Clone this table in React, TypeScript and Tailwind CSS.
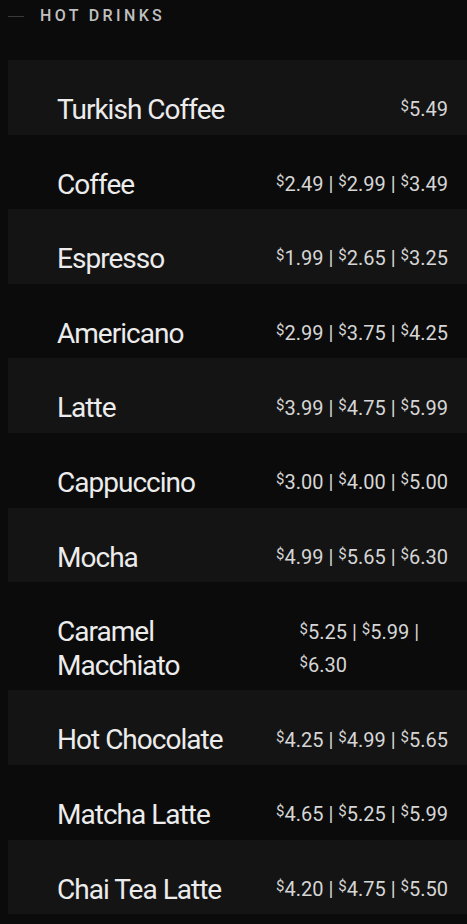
import React from "react";

type Item = { name: string; prices: string[] };

const items: Item[] = [
  { name: "Turkish Coffee", prices: ["5.49"] },
  { name: "Coffee", prices: ["2.49", "2.99", "3.49"] },
  { name: "Espresso", prices: ["1.99", "2.65", "3.25"] },
  { name: "Americano", prices: ["2.99", "3.75", "4.25"] },
  { name: "Latte", prices: ["3.99", "4.75", "5.99"] },
  { name: "Cappuccino", prices: ["3.00", "4.00", "5.00"] },
  { name: "Mocha", prices: ["4.99", "5.65", "6.30"] },
  { name: "Caramel Macchiato", prices: ["5.25", "5.99", "6.30"] },
  { name: "Hot Chocolate", prices: ["4.25", "4.99", "5.65"] },
  { name: "Matcha Latte", prices: ["4.65", "5.25", "5.99"] },
  { name: "Chai Tea Latte", prices: ["4.20", "4.75", "5.50"] },
];

function Price({ value }: { value: string }) {
  return (
    <span className="whitespace-nowrap">
      <span className="text-[15px] leading-none align-[5px]">$</span>
      {value}
    </span>
  );
}

export default function App() {
  return (
    <div className="min-h-screen bg-[#0b0b0b] font-['Roboto','Liberation_Sans',sans-serif] pb-2">
      <div className="flex items-center gap-4 pl-2 pt-[4px]">
        <div className="w-4 h-px bg-[#3a3a3a]" />
        <div className="text-[16px] leading-6 tracking-[0.21em] text-[#c0c0c0] font-medium">
          HOT DRINKS
        </div>
      </div>
      <div className="mt-[32px] flex flex-col">
        {items.map((item, i) => (
          <div
            key={item.name}
            className={
              "ml-2 flex items-center justify-between gap-12 pl-[49px] pr-[19px] pt-[33px] pb-[8px] " +
              (i % 2 === 0 ? "bg-[#141414]" : "bg-transparent")
            }
          >
            <div className="text-[28px] leading-[1.2] tracking-[-0.035em] text-[#ececec]">
              {item.name}
            </div>
            <div className="text-[20px] leading-[33px] text-[#d6d6d6]">
              {item.prices.map((p, j) => (
                <React.Fragment key={j}>
                  <Price value={p} />
                  {j < item.prices.length - 1 ? " | " : ""}
                </React.Fragment>
              ))}
            </div>
          </div>
        ))}
      </div>
    </div>
  );
}
